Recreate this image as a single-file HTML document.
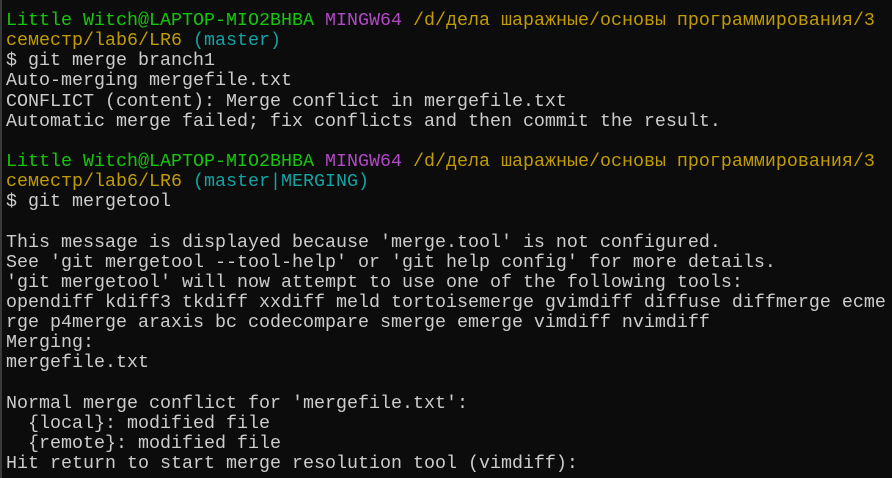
<!DOCTYPE html>
<html><head><meta charset="utf-8"><style>
html,body{margin:0;padding:0;background:#0c0c0c;width:892px;height:478px;overflow:hidden}
body{border-left:2px solid #3a3a3a;box-sizing:border-box}
pre{margin:0;position:absolute;left:6px;top:11px;font-family:"Liberation Mono","DejaVu Sans Mono",monospace;font-size:18.33px;line-height:20.14px;color:#cccccc;white-space:pre}
.g{color:#16c60c}.m{color:#b148c6}.y{color:#c19c00}.c{color:#13a3a3}
</style></head><body><pre><span class="g">Little Witch@LAPTOP-MIO2BHBA</span> <span class="m">MINGW64</span> <span class="y">/d/дела шаражные/основы программирования/3
семестр/lab6/LR6</span> <span class="c">(master)</span>
$ git merge branch1
Auto-merging mergefile.txt
CONFLICT (content): Merge conflict in mergefile.txt
Automatic merge failed; fix conflicts and then commit the result.

<span class="g">Little Witch@LAPTOP-MIO2BHBA</span> <span class="m">MINGW64</span> <span class="y">/d/дела шаражные/основы программирования/3
семестр/lab6/LR6</span> <span class="c">(master|MERGING)</span>
$ git mergetool

This message is displayed because 'merge.tool' is not configured.
See 'git mergetool --tool-help' or 'git help config' for more details.
'git mergetool' will now attempt to use one of the following tools:
opendiff kdiff3 tkdiff xxdiff meld tortoisemerge gvimdiff diffuse diffmerge ecme
rge p4merge araxis bc codecompare smerge emerge vimdiff nvimdiff
Merging:
mergefile.txt

Normal merge conflict for 'mergefile.txt':
  {local}: modified file
  {remote}: modified file
Hit return to start merge resolution tool (vimdiff):</pre></body></html>
